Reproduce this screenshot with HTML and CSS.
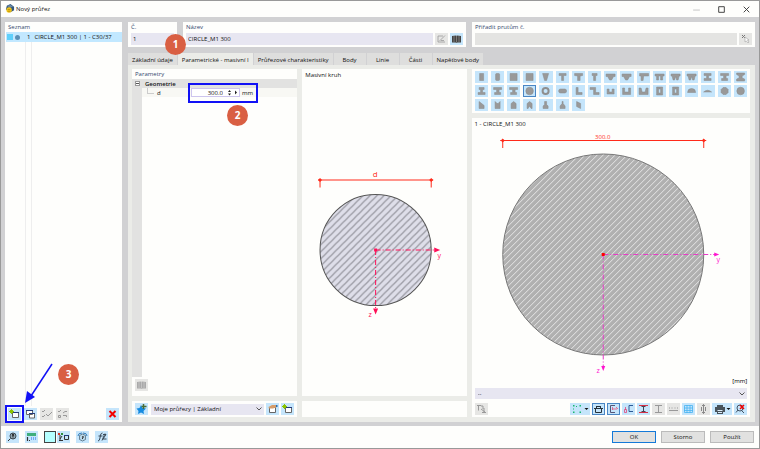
FILE: index.html
```html
<!DOCTYPE html>
<html lang="cs">
<head>
	<meta charset="utf-8">
	<title>Nový průřez</title>
	<link rel="stylesheet" href="styles.css">
</head>
<body>
<svg class="sprite" aria-hidden="true">
	<defs>
		<symbol id="s-rect" viewBox="0 0 13 12"><path d="M4.500 2.500h4v7h-4z"/></symbol>
		<symbol id="s-rrect" viewBox="0 0 13 12"><rect x="4.500" y="2.500" width="4" height="7" rx="1"/></symbol>
		<symbol id="s-square" viewBox="0 0 13 12"><path d="M3 2.500h7v7h-7z"/></symbol>
		<symbol id="s-taper" viewBox="0 0 13 12"><path d="M3.500 2.500h6l-2 7h-2z"/></symbol>
		<symbol id="s-t" viewBox="0 0 13 12"><path d="M3 2.500h7v2H7.500v5h-2v-5H3z"/></symbol>
		<symbol id="s-t2" viewBox="0 0 13 12"><path d="M2.500 2.500h8v2L8 5v4.500H5.500V5l-3-.5z"/></symbol>
		<symbol id="s-t3" viewBox="0 0 13 12"><path d="M4 2.500h5v2H7.500v5h-2v-5H4z"/></symbol>
		<symbol id="s-tv" viewBox="0 0 13 12"><path d="M2 3h9v2.500H9.500L7.500 9h-2l-2-3.500H2z"/></symbol>
		<symbol id="s-hook" viewBox="0 0 13 12"><path d="M2.500 2.500h9v2.500h-5L6 9.500H4V5H2.500z"/></symbol>
		<symbol id="s-pi" viewBox="0 0 13 12"><path d="M2 3h9v2H9.500v4h-2V5h-2v4h-2V5H2z"/></symbol>
		<symbol id="s-piv" viewBox="0 0 13 12"><path d="M2 3h9v2h-1L9 9H7.500L6.500 5.500 5.500 9H4L3 5H2z"/></symbol>
		<symbol id="s-i" viewBox="0 0 13 12"><path d="M3 2.500h7v2H7.500v3H10v2H3v-2h2.500v-3H3z"/></symbol>
		<symbol id="s-i2" viewBox="0 0 13 12"><path d="M2.500 2.500h8v2H8v3h1.500v2h-6v-2H5.500v-3h-3z"/></symbol>
		<symbol id="s-i3" viewBox="0 0 13 12"><path d="M2.500 2h8v1.500L8 5v2l2.500 1v2h-8V8L5 7V5L2.500 3.500z"/></symbol>
		<symbol id="s-i4" viewBox="0 0 13 12"><path d="M4 2.500h5v2H7.500v3H10v2H3v-2h2.500v-3H4z"/></symbol>
		<symbol id="s-circle" viewBox="0 0 13 12"><circle cx="6.500" cy="6" r="3.800"/></symbol>
		<symbol id="s-ring" viewBox="0 0 13 12"><circle class="ring" cx="6.500" cy="6" r="3"/></symbol>
		<symbol id="s-oval" viewBox="0 0 13 12"><rect x="2.500" y="4" width="8" height="4" rx="2"/></symbol>
		<symbol id="s-l" viewBox="0 0 13 12"><path d="M4 2.500h2v5h4v2H4z"/></symbol>
		<symbol id="s-z" viewBox="0 0 13 12"><path d="M2 2.500h5.500v5H11v2H5.500v-5H2z"/></symbol>
		<symbol id="s-u" viewBox="0 0 13 12"><path d="M3 4h2v3h3V4h2v5H3z"/></symbol>
		<symbol id="s-u2" viewBox="0 0 13 12"><path d="M2.500 3h2v4h4V3h2v6.500h-8z"/></symbol>
		<symbol id="s-u3" viewBox="0 0 13 12"><path d="M2 3h2l1 4h3l1-4h2v6.500H2z"/></symbol>
		<symbol id="s-box" viewBox="0 0 13 12"><path fill-rule="evenodd" d="M3.500 2h6v8h-6zM5.500 4v4h2V4z"/></symbol>
		<symbol id="s-dome" viewBox="0 0 13 12"><path d="M2.500 7.500q0-4 4-4t4 4z"/></symbol>
		<symbol id="s-seg" viewBox="0 0 13 12"><path d="M2.500 7q4-3.500 8 0z"/></symbol>
		<symbol id="s-oct" viewBox="0 0 13 12"><path d="M5 2.500h3L10 4.500v3L8 9.500H5L3 7.500v-3z"/></symbol>
		<symbol id="s-cut" viewBox="0 0 13 12"><path d="M4 2.500l5 4v3H4z"/></symbol>
		<symbol id="s-notch" viewBox="0 0 13 12"><path d="M4 2.500l2 2h1l2-2v7H4z"/></symbol>
		<symbol id="s-arch" viewBox="0 0 13 12"><path d="M4 9.500v-5l2.500-2 2.500 2v5z"/></symbol>
		<symbol id="s-arch2" viewBox="0 0 13 12"><path d="M4 9.500v-5l2.500-2 2.500 2v5H8L6.500 7 5 9.500z"/></symbol>
		<symbol id="s-bottle" viewBox="0 0 13 12"><path d="M5.500 2.500h2v3L9 7v2.500H4V7l1.500-1.500z"/></symbol>
		<symbol id="s-bottle2" viewBox="0 0 13 12"><path d="M6 2.500h1v2L9 7v2.500H4V7l2-2.500z"/></symbol>
		<symbol id="s-para" viewBox="0 0 13 12"><path d="M4.500 2.500l4 2v5l-4-2z"/></symbol>

		<symbol id="i-books" viewBox="0 0 13 12"><path fill="currentColor" d="M2 3l4-.5.5.500.5-.5L11 3v6.500H7.500l-1 .5-1-.5H2z"/><path stroke="#fff" stroke-opacity=".5" stroke-width=".6" d="M4 3v6M6.500 3v6.500M9 3v6"/></symbol>
		<symbol id="i-new" viewBox="0 0 13 12"><path fill="#fff" stroke="#666" d="M4.500 4.500h6v5h-6z"/><path stroke="#223a7c" d="M5 4.500h6"/><path stroke="#8bc400" d="M3.500 1v5M1 3.500h5M2 2l3 3M5 2L2 5"/></symbol>
		<symbol id="i-copy" viewBox="0 0 13 12"><path fill="#fff" stroke="#666" d="M2.500 2.500h6v4h-6zM5.500 5.500h5V10h-5z"/><path stroke="#223a7c" d="M2 2.500h7M5 5.500h6"/></symbol>
		<symbol id="i-checks" viewBox="0 0 13 12"><path fill="none" stroke="#999" d="M2 3l1 1 2-2M2 8l1 1 2-2M6 6l2 2 4-4"/></symbol>
		<symbol id="i-unchecks" viewBox="0 0 13 12"><path fill="none" stroke="#999" d="M2 3l1 1 2-2M2.500 7.500h2v2h-2zM7 5l2-1.500h2M7 7.500h3.500V9"/></symbol>
		<symbol id="i-x" viewBox="0 0 13 12"><path stroke="#f20000" stroke-width="2" d="M3.500 3l6 6M9.500 3l-6 6"/></symbol>
		<symbol id="i-edit" viewBox="0 0 13 12"><path fill="none" stroke="#999" stroke-width=".8" d="M8 3H3v6h7M4.500 8L10 2.500M6 7.500h3"/></symbol>
		<symbol id="i-pick" viewBox="0 0 13 12"><path stroke="#777" d="M3 2l3 3M6 2L3 5"/><path fill="#fff" stroke="#aaa" stroke-width=".7" d="M6 4v5l1.500-1L9 10l1-1-1.500-2H10z"/></symbol>
		<symbol id="i-pin" viewBox="0 0 13 12"><path fill="#168be0" d="M6 2l1.500 3 3.500.5L8.500 8l.5 3-3-1.500L3 11l.5-3L1.500 5.500 4.500 5z"/><path stroke="#486c33" stroke-width="1.500" d="M8.500 1v5M6.500 3.500h5"/></symbol>
		<symbol id="i-open" viewBox="0 0 13 12"><path fill="#fff" stroke="#666" d="M3.500 4.500h6v5h-6z"/><path fill="#d69c69" d="M2.500 4L6 2h5v2L7 5.500H3z"/><path fill="#266fb5" d="M10 2h1.500v2H10z"/></symbol>
		<symbol id="i-search" viewBox="0 0 13 12"><circle cx="7" cy="5" r="3" fill="#91a5b0" stroke="#3c4b55"/><path stroke="#333" d="M4.500 7.500L2 10M7 6V5l1-1-1-1-1 .5M7 7.500v-1"/></symbol>
		<symbol id="i-units" viewBox="0 0 13 12"><path fill="#3fae7c" d="M2 2h9v3H2z"/><path stroke="#333" stroke-width="1.200" d="M2.500 6v4M4 9.500h1"/><path stroke="#6fa8f5" stroke-dasharray="1 1" stroke-width="3" d="M6 7.500h5"/></symbol>
		<symbol id="i-tree" viewBox="0 0 13 12"><path fill="#d93b2b" d="M1 2h2v2H1z"/><path fill="#2b8c3e" d="M4 2h2v2H4z"/><path fill="none" stroke="#333" d="M3 4v6M2 9.500h4M5 5L3 8M7.500 4.500h4v4h-4z"/><path stroke="#223a7c" d="M7 4.500h5"/></symbol>
		<symbol id="i-cube" viewBox="0 0 13 12"><path fill="#b8d8ea" stroke="#516b7c" stroke-width=".8" d="M6.500 3l3 1.500v4l-3 1.500-3-1.500v-4z"/><path fill="none" stroke="#3580bd" d="M2 5q0-3 4-3M11 5q0-3-4-3"/><path stroke="#333" d="M6.500 5l1 1-1 1v1"/></symbol>
		<symbol id="i-fx" viewBox="0 0 13 12"><path fill="none" stroke="#3a4a58" d="M3 10q1.500 0 2-3l.5-3q.5-2 2-2M3.500 5h4M8 3.500h3L8 8h3.500M7 9.500l3-7"/></symbol>
		<symbol id="i-tr" viewBox="0 0 13 12"><path fill="none" stroke="#999" d="M2 2.500h4M3.500 2.500v5M6 3h2v3M6 6l4 3M7 9.500h4M9 5v5"/></symbol>
		<symbol id="i-points" viewBox="0 0 18 12"><path fill="#18b870" d="M2 2h1.500v1.500H2zM5 3h1v1H5zM8.500 2H10v1.500H8.500zM2 8.500h1.500V10H2zM2 5.500h1v1H2zM8.500 8.500H10V10H8.500z"/><path fill="#111" d="M13.500 5h4l-2 2z"/></symbol>
		<symbol id="i-dim" viewBox="0 0 13 12"><path fill="none" stroke="#26313a" d="M2 5.500h9M3.500 6v3.500h6V6M4.500 3v2M8.500 3v2M4 3.500h5"/></symbol>
		<symbol id="i-axes" viewBox="0 0 13 12"><path fill="none" stroke="#557" d="M8 2.500H3.500v7H8"/><path fill="none" stroke="#e4557d" stroke-width=".8" d="M5 6h5M9 4l2 2M5.500 4v3"/></symbol>
		<symbol id="i-axes2" viewBox="0 0 13 12"><path fill="none" stroke="#2d5b96" d="M11 2.500H7v6h4"/><path fill="none" stroke="#e0457a" stroke-width=".8" d="M2.500 6.500h2v3h-2zM3.500 4v3"/></symbol>
		<symbol id="i-beam" viewBox="0 0 13 12"><path fill="none" stroke="#d62f45" d="M2 2.500h9M2 9.500h9"/><path stroke="#445" d="M6.500 3v6M4.500 3.500h4M4.500 8.500h4"/></symbol>
		<symbol id="i-beamoff" viewBox="0 0 13 12"><path fill="none" stroke="#999" d="M3 2.500h7M3 9.500h7M6.500 3v6"/></symbol>
		<symbol id="i-ruler" viewBox="0 0 13 12"><path fill="none" stroke="#999" d="M2 7.500h9M2.500 4.500v1M5 4.500v1M8 4.500v1M10.500 4.500v1"/></symbol>
		<symbol id="i-grid" viewBox="0 0 13 12"><path fill="none" stroke="#48b4f3" stroke-width=".8" d="M2.500 2.500h8v7h-8zM5 2v8M8 2v8M2 5h9M2 7.500h9"/></symbol>
		<symbol id="i-height" viewBox="0 0 13 12"><path fill="none" stroke="#888" d="M6.500 1.500v9M5 3l1.500-1.500L8 3M5 9l1.500 1.500L8 9M4.500 4v4M8.500 4v4"/></symbol>
		<symbol id="i-print" viewBox="0 0 18 12"><path fill="#48535a" d="M4 2h6v2h2v5h-2v2H4V9H2V4h2z"/><path stroke="#dceefa" d="M4.500 7.500h5M5 9.500h4"/><path fill="#111" d="M13.500 5h4l-2 2z"/></symbol>
		<symbol id="i-find" viewBox="0 0 13 12"><circle cx="6" cy="5" r="3" fill="none" stroke="#456"/><path stroke="#456" d="M4 7L2 9.500M7 7l3 3"/><path stroke="#f20000" stroke-width="1.500" d="M6 2l4 4M10 2L6 6"/></symbol>
	</defs>
</svg>

<div class="window">
	<header class="titlebar">
		<svg class="logo" viewBox="0 0 11 11"><path fill="#31567e" d="M2 2l4-2 4 3v4L6 9 1 6z"/><path fill="#6987a3" d="M2 2l4-1 3 2-4 1z"/><circle cx="4.500" cy="6.500" r="3" fill="#f0c419"/><path stroke="#a47a00" stroke-width=".7" d="M3 6h3M3 8h3"/></svg>
		<h1>Nový průřez</h1>
		<div class="winbuttons">
			<button aria-label="Minimalizovat"><svg viewBox="0 0 8 8"><path stroke="#ccc" d="M1 4.500h6"/></svg></button>
			<button aria-label="Maximalizovat"><svg viewBox="0 0 8 8"><path fill="none" stroke="#333" stroke-width=".8" d="M1.500 1.500h5v5h-5z"/></svg></button>
			<button aria-label="Zavřít"><svg viewBox="0 0 8 8"><path stroke="#333" stroke-width=".8" d="M1.500 1.500l5 5M6.500 1.500l-5 5"/></svg></button>
		</div>
	</header>

	<main class="client">
		<section class="panel list">
			<h2>Seznam</h2>
			<ul>
				<li><span class="swatch"></span><span class="dot"></span><span class="no">1</span>CIRCLE_M1 300 | 1 - C30/37</li>
			</ul>
			<div class="tools">
				<button class="ib marked" aria-label="Nový"><svg><use href="#i-new"/></svg></button>
				<button class="ib" aria-label="Kopírovat"><svg><use href="#i-copy"/></svg></button>
				<button class="ib off" aria-label="Vybrat vše"><svg><use href="#i-checks"/></svg></button>
				<button class="ib off" aria-label="Zrušit výběr"><svg><use href="#i-unchecks"/></svg></button>
				<button class="ib end" aria-label="Smazat"><svg><use href="#i-x"/></svg></button>
			</div>
			<svg class="pointer" viewBox="0 0 30 42"><path stroke="#1111f5" stroke-width="1.500" d="M28 1L7 33"/><path fill="#1111f5" d="M1 40L3 28l8 6z"/></svg>
			<span class="badge three">3</span>
		</section>

		<div class="work">
			<div class="heads">
				<section class="panel head">
					<label for="no">Č.</label>
					<div class="row"><input id="no" value="1"></div>
				</section>
				<section class="panel head">
					<label for="name">Název</label>
					<div class="row">
						<input id="name" value="CIRCLE_M1 300">
						<button class="ib off" aria-label="Upravit název"><svg><use href="#i-edit"/></svg></button>
						<button class="ib" aria-label="Knihovna"><svg><use href="#i-books"/></svg></button>
					</div>
					<span class="badge one">1</span>
				</section>
				<section class="panel head">
					<label for="members">Přiřadit prutům č.</label>
					<div class="row">
						<input id="members" disabled>
						<button class="ib off" aria-label="Vybrat pruty"><svg><use href="#i-pick"/></svg></button>
					</div>
				</section>
			</div>

			<nav class="tabs">
				<button>Základní údaje</button>
				<button class="active">Parametrické - masivní I</button>
				<button>Průřezové charakteristiky</button>
				<button>Body</button>
				<button>Linie</button>
				<button>Části</button>
				<button>Napěťové body</button>
			</nav>

			<div class="page">
				<div class="col">
					<section class="panel params">
						<h2>Parametry</h2>
						<div class="tree">
							<div class="group"><span class="minus"></span>Geometrie</div>
							<div class="item">
								<label for="d">d</label>
								<div class="value">
									<input id="d" value="300.0">
									<svg class="spin" viewBox="0 0 11 7"><path fill="#222" d="M1 3l1.500-2L4 3zM1 4.500h3l-1.500 2zM8 1.500v4l2-2z"/></svg>
									<span>mm</span>
								</div>
							</div>
							<span class="badge two">2</span>
						</div>
						<div class="under"><button class="ib off" aria-label="Knihovna průřezů"><svg><use href="#i-books"/></svg></button></div>
					</section>
					<section class="panel bar">
						<button class="ib" aria-label="Oblíbené"><svg><use href="#i-pin"/></svg></button>
						<select aria-label="Průřezy"><option>Moje průřezy | Základní</option></select>
						<button class="ib" aria-label="Otevřít"><svg><use href="#i-open"/></svg></button>
						<button class="ib" aria-label="Přidat"><svg><use href="#i-new"/></svg></button>
					</section>
				</div>

				<div class="col">
					<section class="panel sketch">
						<p>Masivní kruh</p>
						<svg viewBox="0 0 164 314">
							<defs><pattern id="hatch" width="7" height="7" patternUnits="userSpaceOnUse"><path fill="#dedee9" d="M0 0h7v7H0z"/><path stroke="#9a9aa3" stroke-width="1.300" d="M-1 8L8-1M-1 1l2-2M6 8l2-2"/></pattern></defs>
							<circle cx="73.500" cy="168.500" r="55.500" fill="url(#hatch)" stroke="#555"/>
							<g class="dimension"><path d="M16 98.500h115M18 98v8M129 98v8"/><path class="solid" d="M16 98.500l2-2 2 2-2 2zM127 98.500l2-2 2 2-2 2z"/><text class="big" x="73" y="96">d</text></g>
							<g class="axes red"><path d="M73.500 168.500H132M73.500 168.500V227"/><path class="solid" d="M132 166l6 2.500-6 2.500zM71 227h5l-2.500 6zM72 167h3v3h-3z"/><text x="137" y="176">y</text><text x="68" y="235">z</text></g>
						</svg>
					</section>
					<section class="panel bar"></section>
				</div>

				<div class="col">
					<section class="panel shapes">
						<button><svg><use href="#s-rect"/></svg></button>
						<button><svg><use href="#s-rrect"/></svg></button>
						<button><svg><use href="#s-square"/></svg></button>
						<button><svg><use href="#s-square"/></svg></button>
						<button><svg><use href="#s-taper"/></svg></button>
						<button><svg><use href="#s-t"/></svg></button>
						<button><svg><use href="#s-t2"/></svg></button>
						<button><svg><use href="#s-t3"/></svg></button>
						<button><svg><use href="#s-tv"/></svg></button>
						<button><svg><use href="#s-tv"/></svg></button>
						<button><svg><use href="#s-hook"/></svg></button>
						<button><svg><use href="#s-pi"/></svg></button>
						<button><svg><use href="#s-piv"/></svg></button>
						<button><svg><use href="#s-piv"/></svg></button>
						<button><svg><use href="#s-i"/></svg></button>
						<button><svg><use href="#s-i2"/></svg></button>
						<button><svg><use href="#s-i3"/></svg></button>
						<button><svg><use href="#s-i4"/></svg></button>
						<button><svg><use href="#s-i2"/></svg></button>
						<button><svg><use href="#s-i2"/></svg></button>
						<button class="chosen"><svg><use href="#s-circle"/></svg></button>
						<button><svg><use href="#s-ring"/></svg></button>
						<button><svg><use href="#s-oval"/></svg></button>
						<button><svg><use href="#s-l"/></svg></button>
						<button><svg><use href="#s-z"/></svg></button>
						<button><svg><use href="#s-u"/></svg></button>
						<button><svg><use href="#s-u2"/></svg></button>
						<button><svg><use href="#s-u3"/></svg></button>
						<button><svg><use href="#s-box"/></svg></button>
						<button><svg><use href="#s-box"/></svg></button>
						<button><svg><use href="#s-dome"/></svg></button>
						<button><svg><use href="#s-seg"/></svg></button>
						<button><svg><use href="#s-oct"/></svg></button>
						<button><svg><use href="#s-circle"/></svg></button>
						<button><svg><use href="#s-cut"/></svg></button>
						<button><svg><use href="#s-notch"/></svg></button>
						<button><svg><use href="#s-arch"/></svg></button>
						<button><svg><use href="#s-arch2"/></svg></button>
						<button><svg><use href="#s-bottle"/></svg></button>
						<button><svg><use href="#s-bottle2"/></svg></button>
						<button><svg><use href="#s-para"/></svg></button>
					</section>
					<section class="panel sketch preview">
						<p>1 - CIRCLE_M1 300</p>
						<svg viewBox="0 0 278 255">
							<defs><pattern id="hatch2" width="6" height="6" patternUnits="userSpaceOnUse"><path fill="#b0b0b0" d="M0 0h6v6H0z"/><path stroke="#e6e6e6" stroke-width="1" d="M-1 7L7-1M-1 1l2-2M5 7l2-2"/></pattern></defs>
							<circle cx="131" cy="124.500" r="100.500" fill="url(#hatch2)" stroke="#777"/>
							<g class="dimension"><path d="M28 10.500h206M30.500 10v8M231.500 10v8"/><path class="solid" d="M28.500 10.500l2-2 2 2-2 2zM229.500 10.500l2-2 2 2-2 2z"/><text x="130.500" y="9">300.0</text></g>
							<g class="axes pink"><path d="M131 124.500h112M131 124.500v112"/><path class="solid" d="M242 122.500l5 2-5 2zM129 236h4l-2 5z"/><path class="origin" d="M129.500 123h3v3h-3z"/><text x="246" y="132">y</text><text x="126" y="243">z</text></g>
							<text class="unit" x="275" y="253">[mm]</text>
						</svg>
						<select aria-label="Pohled"><option>--</option></select>
						<div class="tools">
							<button class="ib off" aria-label="Natočení"><svg><use href="#i-tr"/></svg></button>
							<button class="ib wide end" aria-label="Body"><svg><use href="#i-points"/></svg></button>
							<button class="ib on" aria-label="Kóty"><svg><use href="#i-dim"/></svg></button>
							<button class="ib on" aria-label="Osy"><svg><use href="#i-axes"/></svg></button>
							<button class="ib" aria-label="Hlavní osy"><svg><use href="#i-axes2"/></svg></button>
							<button class="ib" aria-label="Obrys"><svg><use href="#i-beam"/></svg></button>
							<button class="ib off" aria-label="Části průřezu"><svg><use href="#i-beamoff"/></svg></button>
							<button class="ib off" aria-label="Měřítko"><svg><use href="#i-ruler"/></svg></button>
							<button class="ib" aria-label="Rastr"><svg><use href="#i-grid"/></svg></button>
							<button class="ib off" aria-label="Výška"><svg><use href="#i-height"/></svg></button>
							<button class="ib wide" aria-label="Tisk"><svg><use href="#i-print"/></svg></button>
							<button class="ib" aria-label="Zrušit přiblížení"><svg><use href="#i-find"/></svg></button>
						</div>
					</section>
				</div>
			</div>
		</div>
	</main>

	<footer class="footer">
		<button class="ib" aria-label="Hledat"><svg><use href="#i-search"/></svg></button>
		<button class="ib" aria-label="Jednotky"><svg><use href="#i-units"/></svg></button>
		<div class="pair">
			<button class="ib color" aria-label="Barva"></button>
			<button class="ib" aria-label="Zobrazení"><svg><use href="#i-tree"/></svg></button>
		</div>
		<button class="ib" aria-label="Model"><svg><use href="#i-cube"/></svg></button>
		<button class="ib" aria-label="Vzorec"><svg><use href="#i-fx"/></svg></button>
		<div class="actions">
			<button class="default">OK</button>
			<button>Storno</button>
			<button>Použít</button>
		</div>
	</footer>
</div>
</body>
</html>
```

FILE: styles.css
```css
* {
	box-sizing: border-box;
}

body {
	margin: 0;
	font: 6px/10px "Open Sans", "Noto Sans", sans-serif;
	color: #111;
}

h1, h2, p, ul {
	margin: 0;
	padding: 0;
	font-size: 6px;
	font-weight: normal;
	list-style: none;
}

button, input, select {
	font: inherit;
	color: inherit;
	border: 0;
	margin: 0;
	padding: 0;
	border-radius: 0;
	background: none;
}

svg {
	display: block;
}

.sprite {
	position: absolute;
	width: 0;
	height: 0;
}

.window {
	display: flex;
	flex-direction: column;
	height: 100vh;
	border: 1px solid #999;
	background: #fefefc;
}

/* title bar */
.titlebar {
	display: flex;
	align-items: center;
	height: 16px;
	padding-left: 4px;
	gap: 1px;
}

.logo {
	width: 10px;
	height: 10px;
}

.winbuttons {
	display: flex;
	gap: 16px;
	margin-left: auto;
	padding-right: 8px;
}

.winbuttons svg {
	width: 9px;
	height: 9px;
}

/* panels */
.client {
	flex: 1;
	min-height: 0;
	display: grid;
	grid-template-columns: 117px minmax(0, 1fr);
	gap: 6px;
	padding: 5px 4px 4px;
	background: #d1d1d3;
}

.panel {
	background: #fefefc;
}

h2, .head label {
	color: #34486f;
	padding-left: 3px;
}

.list {
	position: relative;
	display: flex;
	flex-direction: column;
}

.list ul {
	flex: 1;
	margin-left: 1px;
	background: linear-gradient(90deg, transparent 19px, #eee 19px, #eee 20px, transparent 20px, transparent 25px, #eee 25px, #eee 26px, transparent 26px);
}

.list li {
	display: flex;
	align-items: center;
	height: 10px;
	background: #c2e8ff;
	white-space: nowrap;
}

.swatch {
	flex: none;
	width: 6px;
	height: 6px;
	margin: 0 2px 0 1px;
	background: #5fd0fb;
}

.dot {
	flex: none;
	width: 5px;
	height: 5px;
	border-radius: 50%;
	background: #5b8fb5;
}

.no {
	margin: 0 4px 0 7px;
}

.tools {
	display: flex;
	gap: 3px;
	padding: 2px 3px;
}

.end {
	margin-left: auto;
}

/* icon buttons */
.ib {
	position: relative;
	flex: none;
	width: 13px;
	height: 12px;
	background: #c5e5fb;
	color: #444;
}

.ib svg {
	width: 100%;
	height: 100%;
}

.off {
	background: #e6e6e4;
	color: #aaa;
}

.on {
	outline: 1px solid #4a86c4;
	outline-offset: -1px;
}

.wide {
	width: 20px;
}

/* marks */
.badge {
	position: absolute;
	z-index: 2;
	width: 21px;
	height: 21px;
	border-radius: 50%;
	background: #d95f43;
	color: #fff;
	font: bold 10px/21px "Open Sans", sans-serif;
	text-align: center;
}

.one {
	left: -18px;
	top: 12px;
}

.two {
	left: 95px;
	top: 26px;
}

.three {
	left: 53px;
	bottom: 37px;
}

.marked::after, .value::after {
	content: "";
	position: absolute;
	inset: -3px;
	border: 2px solid #1111f5;
}

.pointer {
	position: absolute;
	left: 19px;
	bottom: 17px;
	width: 30px;
	height: 42px;
}

/* right side */
.work {
	display: flex;
	flex-direction: column;
	min-height: 0;
}

.heads {
	display: grid;
	grid-template-columns: 49px 1fr 1fr;
	gap: 6px;
	margin-bottom: 6px;
}

.head {
	position: relative;
	height: 25px;
}

.head label {
	display: block;
}

.row {
	display: flex;
	gap: 2px;
	padding: 1px 3px;
}

.row input {
	flex: 1;
	min-width: 0;
	height: 12px;
	padding-left: 2px;
	background: #e7e6f1;
}

.row input:disabled {
	background: #e4e4e2;
}

.tabs {
	display: flex;
	gap: 1px;
}

.tabs button {
	min-width: 32px;
	height: 12px;
	padding: 1px 4px 0;
	background: #dededd;
	white-space: nowrap;
}

.tabs .active {
	background: #ebece8;
}

.page {
	flex: 1;
	min-height: 0;
	display: grid;
	grid-template-columns: 165fr 164fr 278fr;
	gap: 5px;
	padding: 4px 5px 5px 4px;
	background: #ebece8;
}

.col {
	display: flex;
	flex-direction: column;
	gap: 5px;
	min-width: 0;
	min-height: 0;
}

.params, .sketch {
	flex: 1;
	min-height: 0;
	display: flex;
	flex-direction: column;
}

.tree {
	position: relative;
	flex: 1;
	background: linear-gradient(90deg, #e2e2e1 10px, transparent 10px);
}

.group {
	display: flex;
	align-items: center;
	gap: 5px;
	height: 9px;
	padding-left: 3px;
	background: #e2e2e1;
	font-weight: 600;
}

.minus {
	width: 5px;
	height: 5px;
	border: 1px solid #999;
	background: linear-gradient(#555, #555) center / 3px 1px no-repeat #fff;
}

.item {
	display: flex;
	align-items: center;
	height: 9px;
	margin-left: 10px;
	background: #f8f8f4;
}

.item::before {
	content: "";
	width: 6px;
	height: 5px;
	margin: 0 3px 4px 5px;
	border: solid #ccc;
	border-width: 0 0 1px 1px;
}

.item label {
	width: 34px;
}

.value {
	position: relative;
	display: flex;
	align-items: center;
	height: 10px;
	width: 64px;
}

.value::after {
	inset: -5px -3px;
}

.value input {
	width: 49px;
	height: 9px;
	padding-right: 16px;
	border: 1px solid #cdc5ee;
	background: #fff;
	text-align: right;
}

.spin {
	width: 11px;
	height: 7px;
	margin: 0 4px 0 -13px;
}

.under {
	padding: 2px 3px;
}

.bar {
	flex: none;
	display: flex;
	align-items: center;
	gap: 2px;
	height: 16px;
	padding: 0 3px;
}

select {
	appearance: none;
	height: 11px;
	padding-left: 3px;
	background: #e7e6f1 url("data:image/svg+xml,%3Csvg xmlns='http://www.w3.org/2000/svg' width='6' height='4'%3E%3Cpath d='M.5.5 3 3 5.500.5' fill='none' stroke='%23555'/%3E%3C/svg%3E") right 2px center no-repeat;
}

.bar select {
	flex: 1;
	min-width: 0;
	margin-left: 1px;
}

/* shape buttons */
.shapes {
	display: grid;
	grid-template-columns: repeat(17, 1fr);
	gap: 2px 3px;
	padding: 2px 3px;
}

.shapes button {
	height: 12px;
	background: #c5e5fb;
}

.shapes .chosen {
	outline: 1px solid #4a86c4;
	outline-offset: -1px;
}

.shapes svg {
	width: 100%;
	height: 12px;
	fill: #999;
	stroke: #888;
	stroke-width: .5;
}

.ring {
	fill: none;
	stroke: #8f8f8f;
	stroke-width: 2;
}

/* drawings */
.sketch p {
	padding-left: 3px;
	line-height: 12px;
}

.sketch > svg {
	flex: 1;
	width: 100%;
	min-height: 0;
}

.sketch text {
	font-size: 6px;
	text-anchor: middle;
}

.sketch .big {
	font-size: 8px;
}

.sketch .axes text {
	font-size: 7px;
}

.dimension {
	fill: none;
	stroke: #ff2a1a;
}

.dimension .solid, .dimension text {
	fill: #ff2a1a;
	stroke: none;
}

.axes {
	fill: none;
	stroke-dasharray: 5 2 1 2;
}

.red {
	stroke: #ff1058;
}

.pink {
	stroke: #e63ac8;
}

.axes .solid, .axes text {
	fill: #ff1058;
	stroke: none;
}

.pink .solid, .pink text {
	fill: #ff14d0;
}

.axes .origin {
	fill: #f00;
	stroke: none;
}

.sketch .unit {
	text-anchor: end;
}

.preview select {
	margin: 3px 3px 2px;
}

.preview .tools {
	gap: 2px;
}

/* footer */
.footer {
	display: flex;
	align-items: center;
	gap: 6px;
	height: 22px;
	padding: 0 5px;
}

.pair, .actions {
	display: flex;
	gap: 1px;
}

.pair .color {
	width: 12px;
	border: 1px solid #444;
	background: #b5ffff;
}

.actions {
	gap: 5px;
	margin-left: auto;
}

.actions button {
	width: 44px;
	height: 12px;
	border: 1px solid #bbb;
	background: #e1e1e0;
}

.actions .default {
	border-color: #1479d8;
}
```
